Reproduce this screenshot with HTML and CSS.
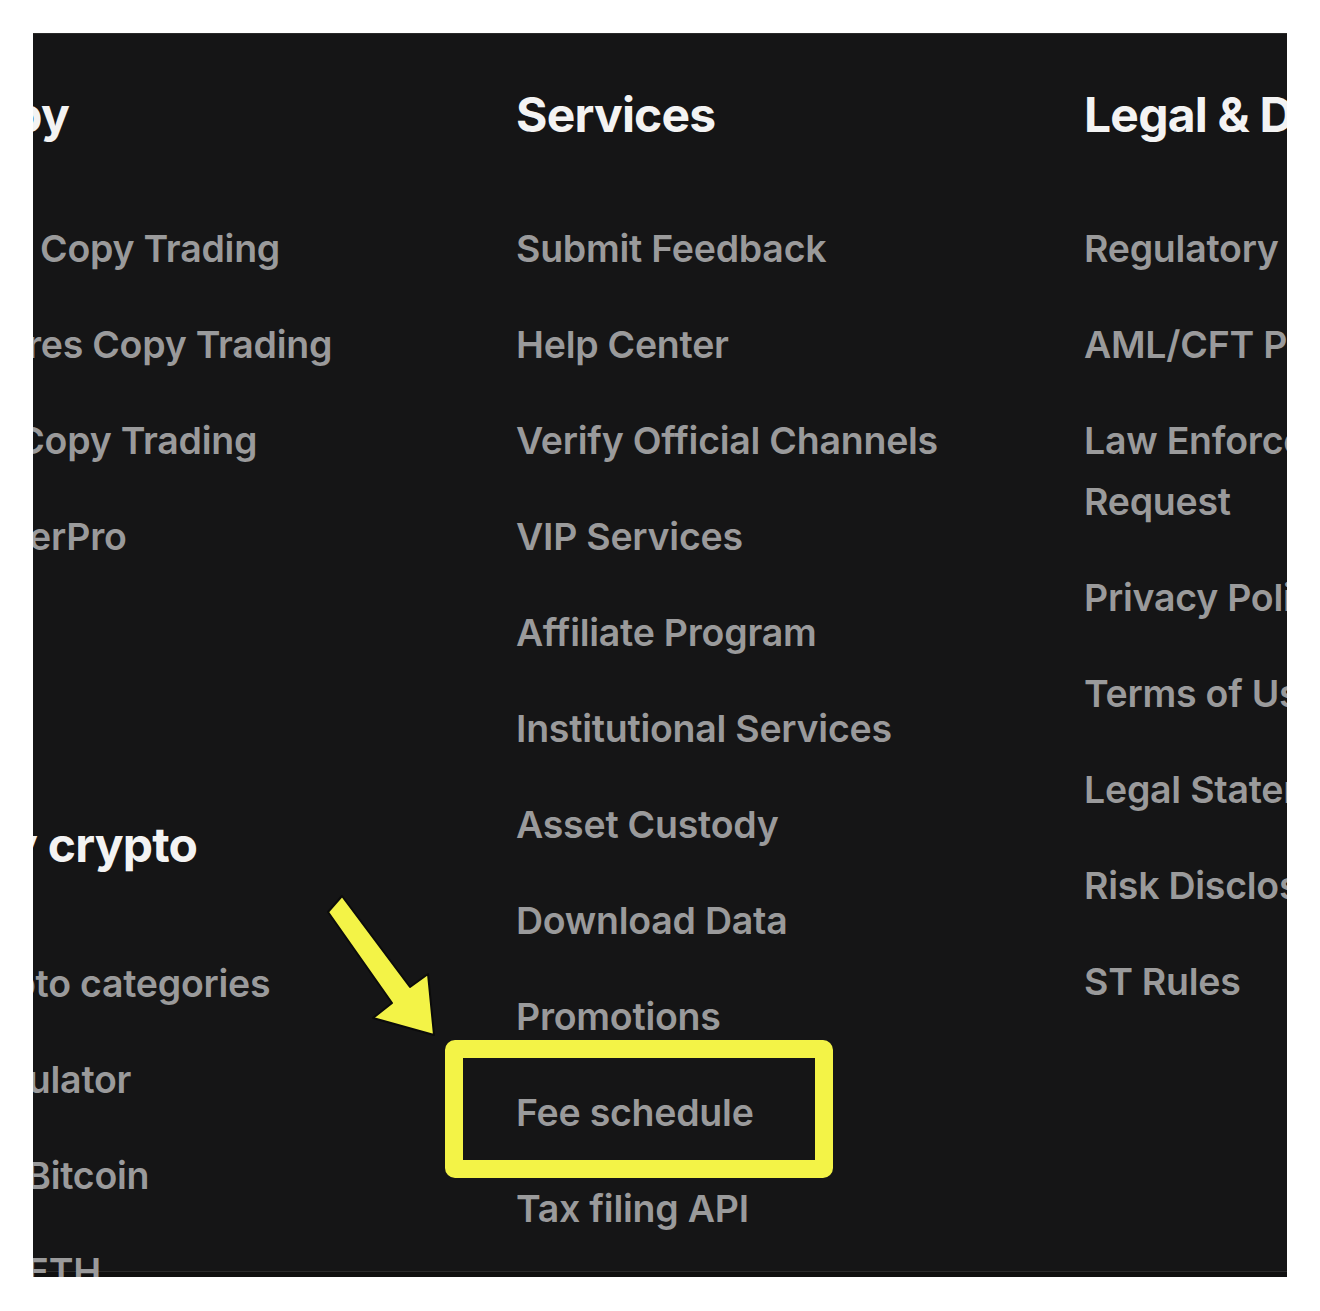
FILE: index.html
```html
<!DOCTYPE html>
<html lang="en">
<head>
<meta charset="utf-8">
<title>Footer</title>
<link rel="stylesheet" href="styles.css">
</head>
<body>
<div class="panel">
  <div class="cols">
    <div class="col">
      <section class="group">
        <h3 class="head head-shift">Copy</h3>
        <ul class="list">
          <li>Spot Copy Trading</li>
          <li>Futures Copy Trading</li>
          <li>Bot Copy Trading</li>
          <li>TraderPro</li>
        </ul>
      </section>
      <section class="group group-second">
        <h3 class="head head-shift">Buy crypto</h3>
        <ul class="list">
          <li>Crypto categories</li>
          <li>Calculator</li>
          <li>Buy Bitcoin</li>
          <li>Buy ETH</li>
        </ul>
      </section>
    </div>
    <div class="col">
      <section class="group">
        <h3 class="head">Services</h3>
        <ul class="list">
          <li>Submit Feedback</li>
          <li>Help Center</li>
          <li>Verify Official Channels</li>
          <li>VIP Services</li>
          <li>Affiliate Program</li>
          <li>Institutional Services</li>
          <li>Asset Custody</li>
          <li>Download Data</li>
          <li>Promotions</li>
          <li>Fee schedule</li>
          <li>Tax filing API</li>
        </ul>
      </section>
    </div>
    <div class="col">
      <section class="group">
        <h3 class="head">Legal &amp; Disclosures</h3>
        <ul class="list">
          <li>Regulatory License</li>
          <li>AML/CFT Program</li>
          <li>Law Enforcement Request</li>
          <li>Privacy Policy</li>
          <li>Terms of Use</li>
          <li>Legal Statement</li>
          <li>Risk Disclosure</li>
          <li>ST Rules</li>
        </ul>
      </section>
    </div>
  </div>
  <svg class="arrow" width="130" height="150" viewBox="0 0 130 150" aria-hidden="true">
    <polygon points="20,8 88,99 106,86 112,147 51,130 70,115 6,24" fill="#f3f347" stroke="#0b0b0b" stroke-width="2" stroke-linejoin="round"/>
  </svg>
  <div class="highlight"></div>
</div>
</body>
</html>
```

FILE: styles.css
```css
html, body {
  margin: 0;
  padding: 0;
  background: #ffffff;
}

body {
  padding: 33px 0 0 33px;
  font-family: "Inter", "Liberation Sans", sans-serif;
}

.panel {
  position: relative;
  width: 1254px;
  height: 1244px;
  background: #151516;
  overflow: hidden;
  box-shadow: inset 0 1px 0 #2a2a2a, inset 0 -5px 0 #101010, inset 0 -6px 0 #2a2a2a;
}

.cols {
  display: flex;
  margin-left: -85px;
  padding-top: 54px;
}

.col {
  flex: 0 0 568px;
  width: 568px;
}

.group {
  width: 440px;
}

.group-second {
  margin-top: 250px;
}

.head {
  margin: 0;
  font-size: 48px;
  line-height: 56px;
  font-weight: 700;
  color: #f3f3f3;
  letter-spacing: -0.8px;
  white-space: nowrap;
}

.head-shift {
  padding-left: 1px;
}

.list {
  list-style: none;
  margin: 75px 0 0;
  padding: 0;
  display: flex;
  flex-direction: column;
  gap: 35px;
}

.list li {
  font-size: 37.5px;
  line-height: 61px;
  font-weight: 600;
  color: #9a9a9b;
  letter-spacing: -0.25px;
}

.group-second .list {
  margin-top: 80px;
}

.arrow {
  position: absolute;
  left: 289px;
  top: 855px;
}

.highlight {
  position: absolute;
  left: 412px;
  top: 1007px;
  width: 352px;
  height: 102px;
  border: 18px solid #f3f347;
  border-radius: 10px;
}
```
